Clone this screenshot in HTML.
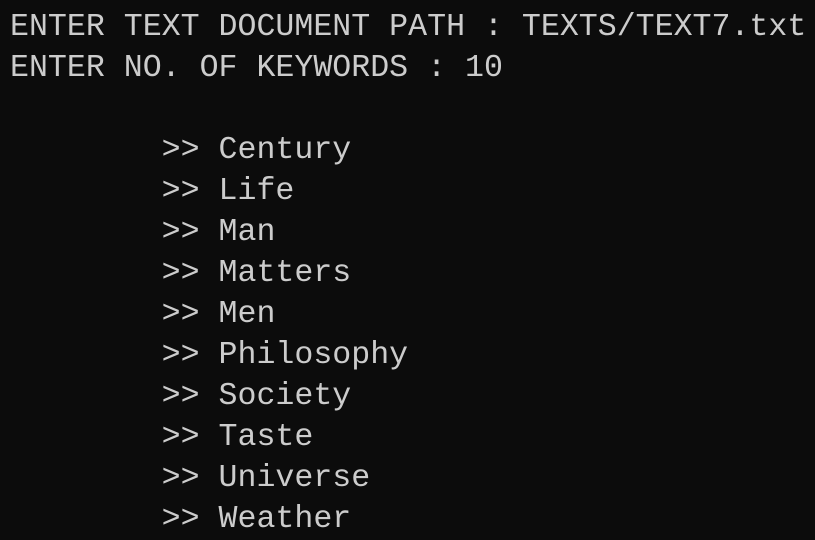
<!DOCTYPE html>
<html><head><meta charset="utf-8"><style>
html,body{margin:0;padding:0;background:#0c0c0c;width:815px;height:540px;overflow:hidden}
pre{margin:0;position:absolute;left:10px;top:7px;font-family:"Liberation Mono",monospace;font-size:31.6px;line-height:41px;color:#cccccc;white-space:pre}
</style></head><body><pre>ENTER TEXT DOCUMENT PATH : TEXTS/TEXT7.txt
ENTER NO. OF KEYWORDS : 10

        >> Century
        >> Life
        >> Man
        >> Matters
        >> Men
        >> Philosophy
        >> Society
        >> Taste
        >> Universe
        >> Weather</pre></body></html>
